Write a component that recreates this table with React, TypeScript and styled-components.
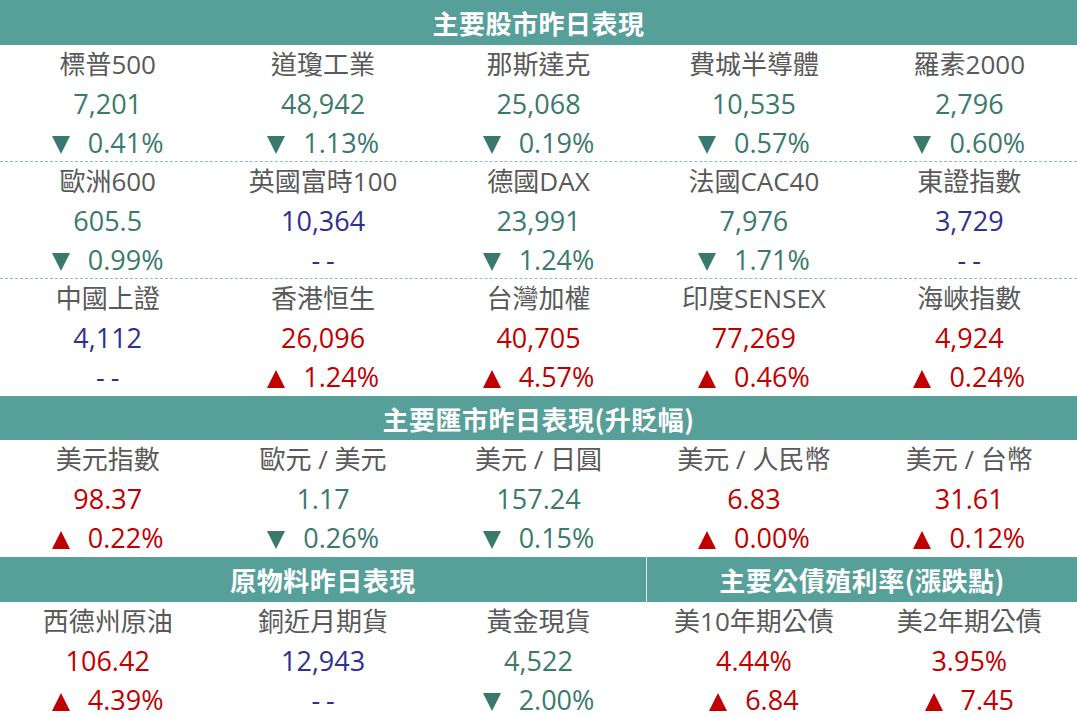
import React from "react";
import styled, { createGlobalStyle } from "styled-components";

const Global = createGlobalStyle`
  html, body { margin: 0; padding: 0; background: #ffffff; }
  body { font-family: "Open Sans", "Noto Sans CJK TC", sans-serif; }
`;

type Trend = "up" | "down" | "flat";

interface Item {
  name: string;
  value: string;
  change: string;
  trend: Trend;
}

const trendColor: Record<Trend, string> = {
  up: "#c00000",
  down: "#3a7a6c",
  flat: "#2e3192",
};

const Page = styled.div`
  width: 1077px;
  overflow: hidden;
`;

const Header = styled.div<{ $h: number }>`
  height: ${(p) => p.$h}px;
  background: #57a09a;
  color: #ffffff;
  font-family: "Noto Sans CJK TC", sans-serif;
  font-size: 26px;
  font-weight: 700;
  display: flex;
  align-items: center;
  justify-content: center;
  letter-spacing: 0.5px;
`;

const Grid = styled.div<{ $dashed?: boolean }>`
  display: grid;
  grid-template-columns: repeat(5, 1fr);
  height: 117px;
  box-sizing: border-box;
  align-items: start;
  border-bottom: ${(p) => (p.$dashed ? "1px dashed #8dbdb8" : "none")};
`;

const HeaderRow = styled.div`
  display: grid;
  grid-template-columns: 3fr 2fr;
`;

const SplitHeader = styled(Header)<{ $divider?: boolean }>`
  border-left: ${(p) => (p.$divider ? "1px solid #d6ebe9" : "none")};
`;

const Cell = styled.div`
  display: flex;
  flex-direction: column;
  align-items: center;
`;

const Line = styled.div<{ $color: string; $size: number }>`
  height: 39px;
  line-height: 39px;
  font-size: ${(p) => p.$size}px;
  color: ${(p) => p.$color};
  white-space: pre;
`;

const Tri = styled.span<{ $up: boolean; $color: string }>`
  display: inline-block;
  width: 0;
  height: 0;
  border-left: 9px solid transparent;
  border-right: 9px solid transparent;
  ${(p) =>
    p.$up
      ? `border-bottom: 18px solid ${p.$color};`
      : `border-top: 18px solid ${p.$color};`}
  margin-right: 18px;
  vertical-align: -1px;
`;

const Dash = styled.span`
  letter-spacing: 6px;
  margin-right: -6px;
`;

const ItemCell: React.FC<{ item: Item }> = ({ item }) => {
  const c = trendColor[item.trend];
  return (
    <Cell>
      <Line $color="#595959" $size={26}>
        {item.name}
      </Line>
      <Line $color={c} $size={27}>
        {item.value}
      </Line>
      <Line $color={c} $size={27}>
        {item.trend === "flat" ? (
          <Dash>--</Dash>
        ) : (
          <>
            <Tri $up={item.trend === "up"} $color={c} />
            {item.change}
          </>
        )}
      </Line>
    </Cell>
  );
};

const stocks: Item[][] = [
  [
    { name: "標普500", value: "7,201", change: "0.41%", trend: "down" },
    { name: "道瓊工業", value: "48,942", change: "1.13%", trend: "down" },
    { name: "那斯達克", value: "25,068", change: "0.19%", trend: "down" },
    { name: "費城半導體", value: "10,535", change: "0.57%", trend: "down" },
    { name: "羅素2000", value: "2,796", change: "0.60%", trend: "down" },
  ],
  [
    { name: "歐洲600", value: "605.5", change: "0.99%", trend: "down" },
    { name: "英國富時100", value: "10,364", change: "--", trend: "flat" },
    { name: "德國DAX", value: "23,991", change: "1.24%", trend: "down" },
    { name: "法國CAC40", value: "7,976", change: "1.71%", trend: "down" },
    { name: "東證指數", value: "3,729", change: "--", trend: "flat" },
  ],
  [
    { name: "中國上證", value: "4,112", change: "--", trend: "flat" },
    { name: "香港恒生", value: "26,096", change: "1.24%", trend: "up" },
    { name: "台灣加權", value: "40,705", change: "4.57%", trend: "up" },
    { name: "印度SENSEX", value: "77,269", change: "0.46%", trend: "up" },
    { name: "海峽指數", value: "4,924", change: "0.24%", trend: "up" },
  ],
];

const fx: Item[] = [
  { name: "美元指數", value: "98.37", change: "0.22%", trend: "up" },
  { name: "歐元 / 美元", value: "1.17", change: "0.26%", trend: "down" },
  { name: "美元 / 日圓", value: "157.24", change: "0.15%", trend: "down" },
  { name: "美元 / 人民幣", value: "6.83", change: "0.00%", trend: "up" },
  { name: "美元 / 台幣", value: "31.61", change: "0.12%", trend: "up" },
];

const commodities: Item[] = [
  { name: "西德州原油", value: "106.42", change: "4.39%", trend: "up" },
  { name: "銅近月期貨", value: "12,943", change: "--", trend: "flat" },
  { name: "黃金現貨", value: "4,522", change: "2.00%", trend: "down" },
  { name: "美10年期公債", value: "4.44%", change: "6.84", trend: "up" },
  { name: "美2年期公債", value: "3.95%", change: "7.45", trend: "up" },
];

export default function App() {
  return (
    <Page>
      <Global />
      <Header $h={45}>主要股市昨日表現</Header>
      {stocks.map((row, i) => (
        <Grid key={i} $dashed={i < stocks.length - 1}>
          {row.map((it) => (
            <ItemCell key={it.name} item={it} />
          ))}
        </Grid>
      ))}
      <Header $h={44}>主要匯市昨日表現(升貶幅)</Header>
      <Grid>
        {fx.map((it) => (
          <ItemCell key={it.name} item={it} />
        ))}
      </Grid>
      <HeaderRow>
        <SplitHeader $h={45}>原物料昨日表現</SplitHeader>
        <SplitHeader $h={45} $divider>
          主要公債殖利率(漲跌點)
        </SplitHeader>
      </HeaderRow>
      <Grid>
        {commodities.map((it) => (
          <ItemCell key={it.name} item={it} />
        ))}
      </Grid>
    </Page>
  );
}
